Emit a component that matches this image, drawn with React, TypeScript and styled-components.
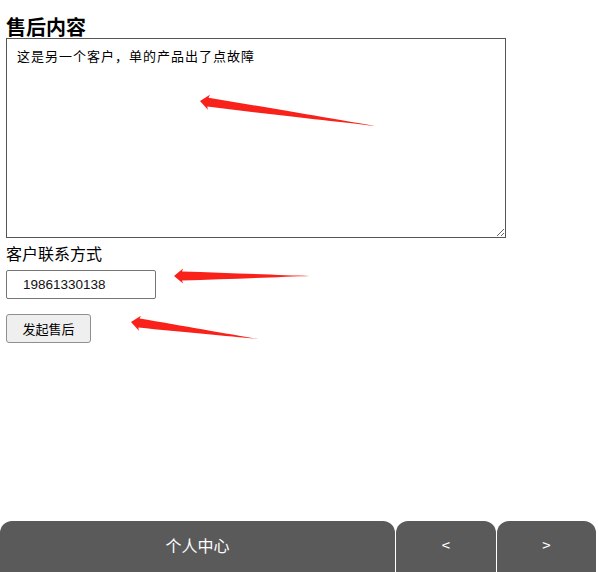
import React from "react";
import styled, { createGlobalStyle } from "styled-components";

const Global = createGlobalStyle`
  html, body { margin: 0; padding: 0; background: #fff; }
  body { font-family: "Liberation Sans", "Noto Sans CJK SC", sans-serif; color: #000; }
  #root { min-height: 100vh; }
`;

const Page = styled.div`
  position: relative;
  min-height: 100vh;
  display: flex;
  flex-direction: column;
`;

const Form = styled.div`
  padding: 16px 6px 0;
  display: flex;
  flex-direction: column;
  align-items: flex-start;
`;

const Title = styled.h2`
  margin: 0;
  font-family: "Noto Sans CJK SC", sans-serif;
  font-size: 20px;
  font-weight: 700;
  line-height: 22px;
`;

const TextArea = styled.textarea`
  display: block;
  box-sizing: border-box;
  width: 500px;
  height: 200px;
  margin: 0;
  padding: 8px 10px;
  border: 1px solid #555;
  border-radius: 0;
  font-family: "Noto Sans CJK SC", sans-serif;
  font-size: 13px;
  letter-spacing: 1px;
  line-height: 18px;
  color: #000;
  outline: none;
`;

const Label = styled.div`
  margin-top: 3px;
  font-family: "Noto Sans CJK SC", sans-serif;
  font-size: 16px;
  line-height: 24px;
`;

const Input = styled.input`
  display: block;
  box-sizing: border-box;
  margin-top: 5px;
  width: 150px;
  height: 29px;
  padding: 0 16px;
  border: 1px solid #767676;
  border-radius: 2px;
  font-family: "Liberation Sans", sans-serif;
  font-size: 13.5px;
  color: #111;
  outline: none;
`;

const Button = styled.button`
  display: block;
  box-sizing: border-box;
  margin-top: 15px;
  width: 85px;
  height: 29px;
  padding: 0;
  border: 1px solid #8f8f8f;
  border-radius: 3px;
  background: #efefef;
  font-family: "Noto Sans CJK SC", sans-serif;
  font-size: 13px;
  color: #000;
`;

const Bar = styled.nav`
  margin-top: auto;
  display: grid;
  grid-template-columns: 395px 100px 99px;
  column-gap: 1px;
  width: 596px;
`;

const BarItem = styled.div<{ $small?: boolean }>`
  box-sizing: border-box;
  height: 51px;
  padding-bottom: 4px;
  display: flex;
  align-items: center;
  justify-content: center;
  background: #5a5a5a;
  border-radius: 12px 12px 0 0;
  color: #fff;
  font-family: "Noto Sans CJK SC", sans-serif;
  font-size: ${(p) => (p.$small ? "15px" : "16px")};
`;

const Overlay = styled.svg`
  position: absolute;
  left: 0;
  top: 0;
  pointer-events: none;
`;

type ArrowProps = { x: number; y: number; tx: number; ty: number };

const Arrow = ({ x, y, tx, ty }: ArrowProps) => {
  const dx = tx - x;
  const dy = ty - y;
  const L = Math.sqrt(dx * dx + dy * dy);
  const a = (Math.atan2(dy, dx) * 180) / Math.PI;
  const d = `M0 0 L9 -7.5 L8 -4.5 C ${L * 0.4} -3 ${L * 0.8} -0.8 ${L} 0 C ${L * 0.8} 0.8 ${L * 0.4} 3.4 8 4.5 L9 7.5 Z`;
  return (
    <g transform={`translate(${x} ${y}) rotate(${a})`}>
      <path d={d} fill="#f8221a" />
    </g>
  );
};

export default function App() {
  return (
    <Page>
      <Global />
      <Form>
        <Title>售后内容</Title>
        <TextArea defaultValue="这是另一个客户，单的产品出了点故障" />
        <Label>客户联系方式</Label>
        <Input defaultValue="19861330138" />
        <Button>发起售后</Button>
      </Form>
      <Bar>
        <BarItem>个人中心</BarItem>
        <BarItem $small>&lt;</BarItem>
        <BarItem $small>&gt;</BarItem>
      </Bar>
      <Overlay width="599" height="400" viewBox="0 0 599 400">
        <Arrow x={200} y={101} tx={375} ty={126} />
        <Arrow x={174} y={276} tx={310} ty={276} />
        <Arrow x={131} y={322} tx={258} ty={339} />
      </Overlay>
    </Page>
  );
}
